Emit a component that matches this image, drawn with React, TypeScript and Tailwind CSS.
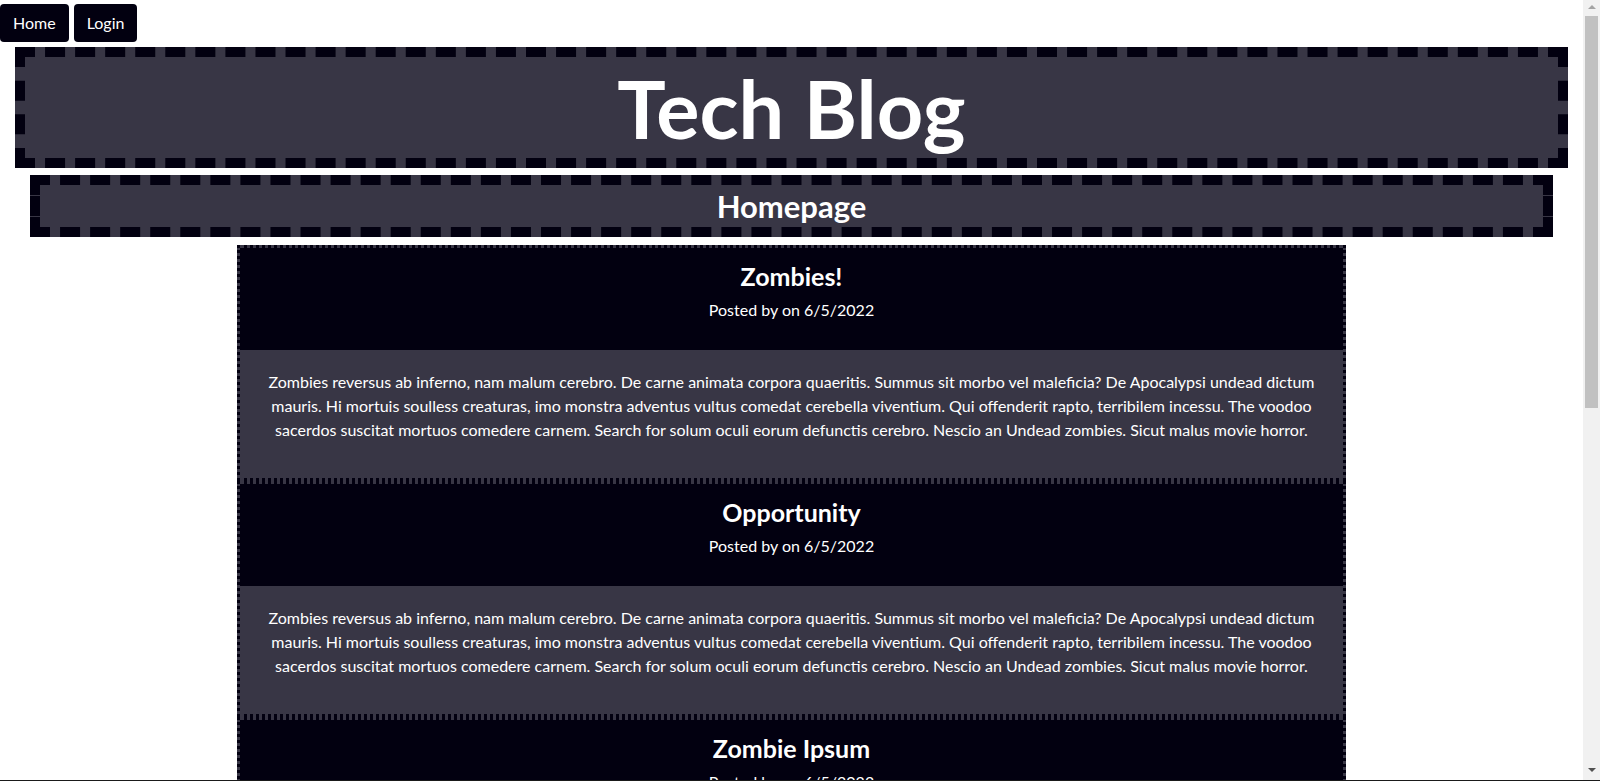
import React from 'react';

const posts = [
  { title: 'Zombies!', date: '6/5/2022' },
  { title: 'Opportunity', date: '6/5/2022' },
  { title: 'Zombie Ipsum', date: '6/5/2022' },
  { title: 'Brains', date: '6/5/2022' },
];

const lorem =
  'Zombies reversus ab inferno, nam malum cerebro. De carne animata corpora quaeritis. Summus sit morbo vel maleficia? De Apocalypsi undead dictum mauris. Hi mortuis soulless creaturas, imo monstra adventus vultus comedat cerebella viventium. Qui offenderit rapto, terribilem incessu. The voodoo sacerdos suscitat mortuos comedere carnem. Search for solum oculi eorum defunctis cerebro. Nescio an Undead zombies. Sicut malus movie horror.';

function Scrollbar() {
  return (
    <div className="flex w-[17px] shrink-0 flex-col items-center bg-[#f1f1f1]">
      <div className="mt-[5px] h-0 w-0 border-x-[4px] border-b-[4px] border-x-transparent border-b-[#a3a3a3]" />
      <div className="mt-[7px] h-[392px] w-[13px] bg-[#c1c1c1]" />
      <div className="mt-auto mb-[8px] h-0 w-0 border-x-[4px] border-t-[4px] border-x-transparent border-t-[#505050]" />
    </div>
  );
}

export default function App() {
  return (
    <div className="flex h-screen flex-col overflow-hidden bg-white font-['Lato',sans-serif] text-white">
      <div className="flex min-h-0 flex-1">
        <div className="min-w-0 flex-1 overflow-hidden">
          <nav className="flex gap-[5px] pt-1">
            <a href="#" className="flex h-[38px] items-center rounded bg-[#020010] px-[13px] text-base">
              Home
            </a>
            <a href="#" className="flex h-[38px] items-center rounded bg-[#020010] px-[13px] text-base">
              Login
            </a>
          </nav>

          <header className="mx-[15px] mt-[5px] border-[10px] border-dashed border-[#020010] bg-[#383645] text-center">
            <h1 className="text-[81px] font-bold leading-[101px]">Tech Blog</h1>
          </header>

          <section className="mx-[30px] mt-[7px] border-[10px] border-dashed border-[#020010] bg-[#383645] text-center">
            <h2 className="text-[31px] font-bold leading-[42px]">Homepage</h2>
          </section>

          <main className="mx-auto mt-2 mb-10 w-[70%]">
            {posts.map((post) => (
              <article key={post.title} className="border-[3px] border-dotted border-[#020010] bg-[#383645]">
                <div className="h-[102px] bg-[#020010] pt-[10px] text-center">
                  <h3 className="text-[25px] font-bold leading-9">{post.title}</h3>
                  <p className="mt-1 text-base leading-6">Posted by on {post.date}</p>
                </div>
                <div className="h-[128px] px-4 pt-5 text-center">
                  <p className="text-base leading-6">{lorem}</p>
                </div>
              </article>
            ))}
          </main>
        </div>
        <Scrollbar />
      </div>
      <div className="h-px shrink-0 bg-[#1a1a1a]" />
    </div>
  );
}
